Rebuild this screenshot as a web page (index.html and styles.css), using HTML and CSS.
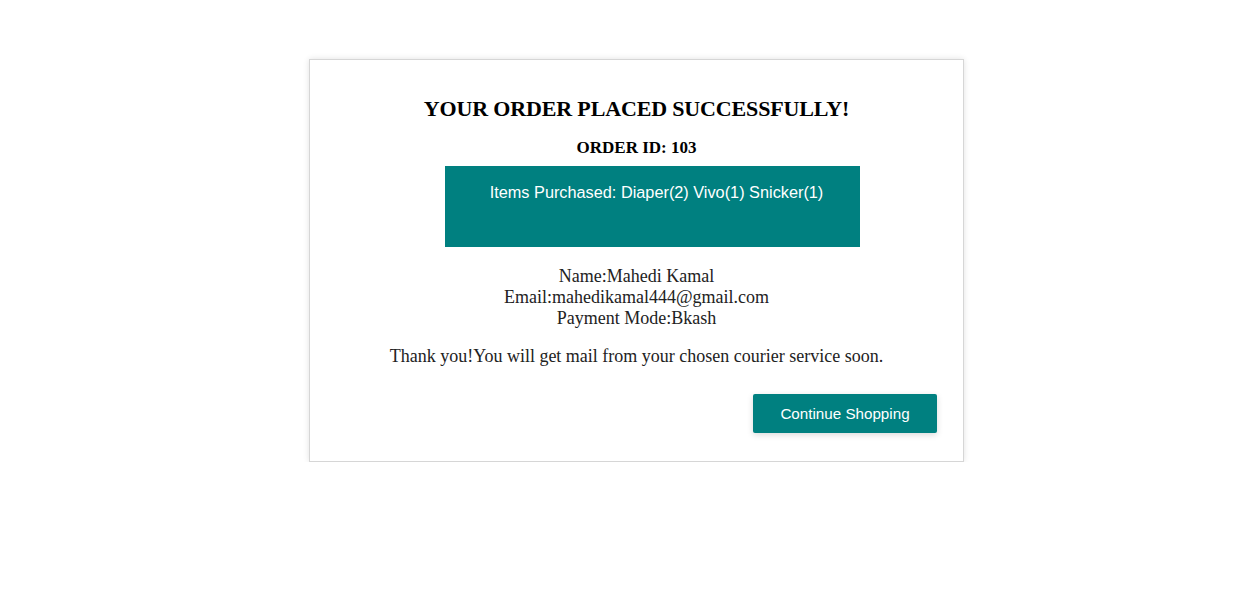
FILE: index.html
```html
<!DOCTYPE html>
<html>
<head>
<meta charset="utf-8">
<link rel="stylesheet" href="styles.css">
</head>
<body>
<div class="card">
  <h2 class="title">YOUR ORDER PLACED SUCCESSFULLY!</h2>
  <h4 class="order-id">ORDER ID: 103</h4>
  <div class="items">
    <p>Items Purchased: Diaper(2) Vivo(1) Snicker(1)</p>
  </div>
  <div class="info">
    <div>Name:Mahedi Kamal</div>
    <div>Email:mahedikamal444@gmail.com</div>
    <div>Payment Mode:Bkash</div>
  </div>
  <p class="thanks">Thank you!You will get mail from your chosen courier service soon.</p>
  <div class="actions">
    <button class="btn">Continue Shopping</button>
  </div>
</div>
</body>
</html>
```
FILE: styles.css
```css
html, body {
  margin: 0;
  padding: 0;
  background: #ffffff;
}
body {
  font-family: "Liberation Serif", "Times New Roman", serif;
  color: #222;
}
.card {
  box-sizing: border-box;
  margin: 59px 0 0 309px;
  width: 655px;
  height: 403px;
  border: 1px solid #d6d6d6;
  box-shadow: 0 0 6px rgba(0,0,0,0.12);
  background: #fff;
  padding-top: 36px;
}
.title {
  margin: 0;
  text-align: center;
  font-size: 22px;
  letter-spacing: -0.15px;
  font-weight: bold;
  color: #000;
  line-height: 26px;
}
.order-id {
  margin: 16px 0 0;
  text-align: center;
  font-size: 17px;
  font-weight: bold;
  color: #000;
  line-height: 20px;
}
.items {
  margin: 8px 0 0 135px;
  width: 415px;
  height: 81px;
  box-sizing: border-box;
  background: #008080;
  padding: 16px 0 0 8px;
}
.items p {
  margin: 0;
  text-align: center;
  font-family: "Liberation Sans", Arial, sans-serif;
  font-size: 16.3px;
  color: #fff;
  line-height: 20px;
}
.info {
  margin-top: 19px;
  text-align: center;
  font-size: 18px;
  line-height: 21px;
}
.thanks {
  margin: 17px 0 0;
  text-align: center;
  font-size: 18px;
  line-height: 21px;
}
.actions {
  display: flex;
  justify-content: flex-end;
  padding-right: 26px;
  margin-top: 27px;
}
.btn {
  width: 184px;
  height: 39px;
  border: none;
  border-radius: 2px;
  background: #008080;
  color: #fff;
  font-family: "Liberation Sans", Arial, sans-serif;
  font-size: 15.2px;
  box-shadow: 0 2px 6px rgba(0,0,0,0.15);
  cursor: pointer;
}
```
